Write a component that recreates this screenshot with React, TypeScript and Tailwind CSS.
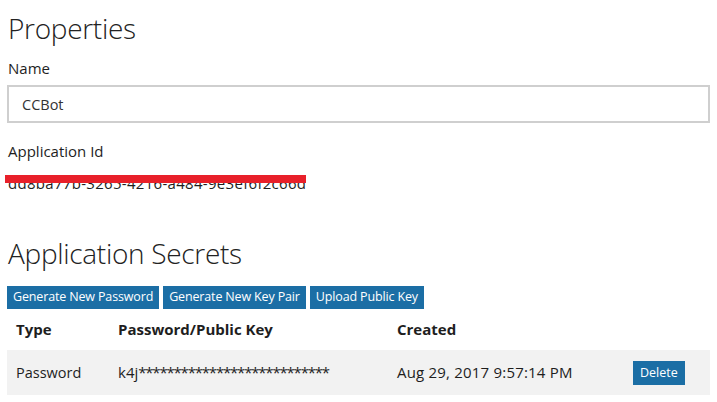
import React from 'react';

const font = { fontFamily: '"Open Sans", "Noto Sans", sans-serif' };

const SecretButton: React.FC<{ label: string }> = ({ label }) => (
  <button className="h-[23px] bg-[#1b6ea5] px-[6px] text-[12.5px] leading-none tracking-[-0.15px] text-white">
    {label}
  </button>
);

const App: React.FC = () => {
  return (
    <div className="h-[402px] w-[717px] overflow-hidden bg-white text-[#1e1e1e]" style={font}>
      <div className="pl-[7px]">
        {/* Properties */}
        <h1 className="pt-[9px] pl-px text-[28px] font-light leading-[38px] tracking-[-0.3px] text-[#222]">Properties</h1>
        <label className="mt-[11px] block pl-px text-[15px] leading-[20px]">Name</label>
        <input
          className="mt-[7px] block h-[38px] w-[703px] border-2 border-[#cfcfcf] px-[13px] text-[14.5px] text-[#333] outline-none"
          defaultValue="CCBot"
          style={font}
        />
        <label className="mt-[18px] block pl-px text-[15px] leading-[20px]">Application Id</label>
        <div className="relative mt-[12px] h-[22px]">
          <div className="pl-[1px] text-[15px] leading-[20px] tracking-[0.3px]">dd8ba77b-3265-4216-a484-9e3ef6f2c66d</div>
          <div className="absolute left-[-2px] top-[2px] h-[8px] w-[301px] bg-[#e8202a]" />
        </div>

        {/* Application Secrets */}
        <h2 className="mt-[39px] pl-px text-[28px] font-light leading-[38px] tracking-[-0.3px] text-[#222]">Application Secrets</h2>
        <div className="mt-[14px] flex gap-[4px]">
          <SecretButton label="Generate New Password" />
          <SecretButton label="Generate New Key Pair" />
          <SecretButton label="Upload Public Key" />
        </div>

        <div className="w-[703px] text-[15px]">
          <div className="grid h-[41px] grid-cols-[111px_279px_236px_1fr] pt-[10px] font-bold leading-[20px]">
            <div className="pl-[9px]">Type</div>
            <div>Password/Public Key</div>
            <div>Created</div>
            <div />
          </div>
          <div className="grid h-[45px] grid-cols-[111px_279px_236px_1fr] items-center bg-[#f2f2f2]">
            <div className="pl-[9px] text-[14.5px]">Password</div>
            <div>
              k4j<span className="tracking-[-1.2px]">***************************</span>
            </div>
            <div className="tracking-[0.2px]">Aug 29, 2017 9:57:14 PM</div>
            <div>
              <button className="h-[24px] bg-[#1b6ea5] px-[7px] text-[12.5px] leading-none text-white">Delete</button>
            </div>
          </div>
        </div>
      </div>
    </div>
  );
};

export default App;
